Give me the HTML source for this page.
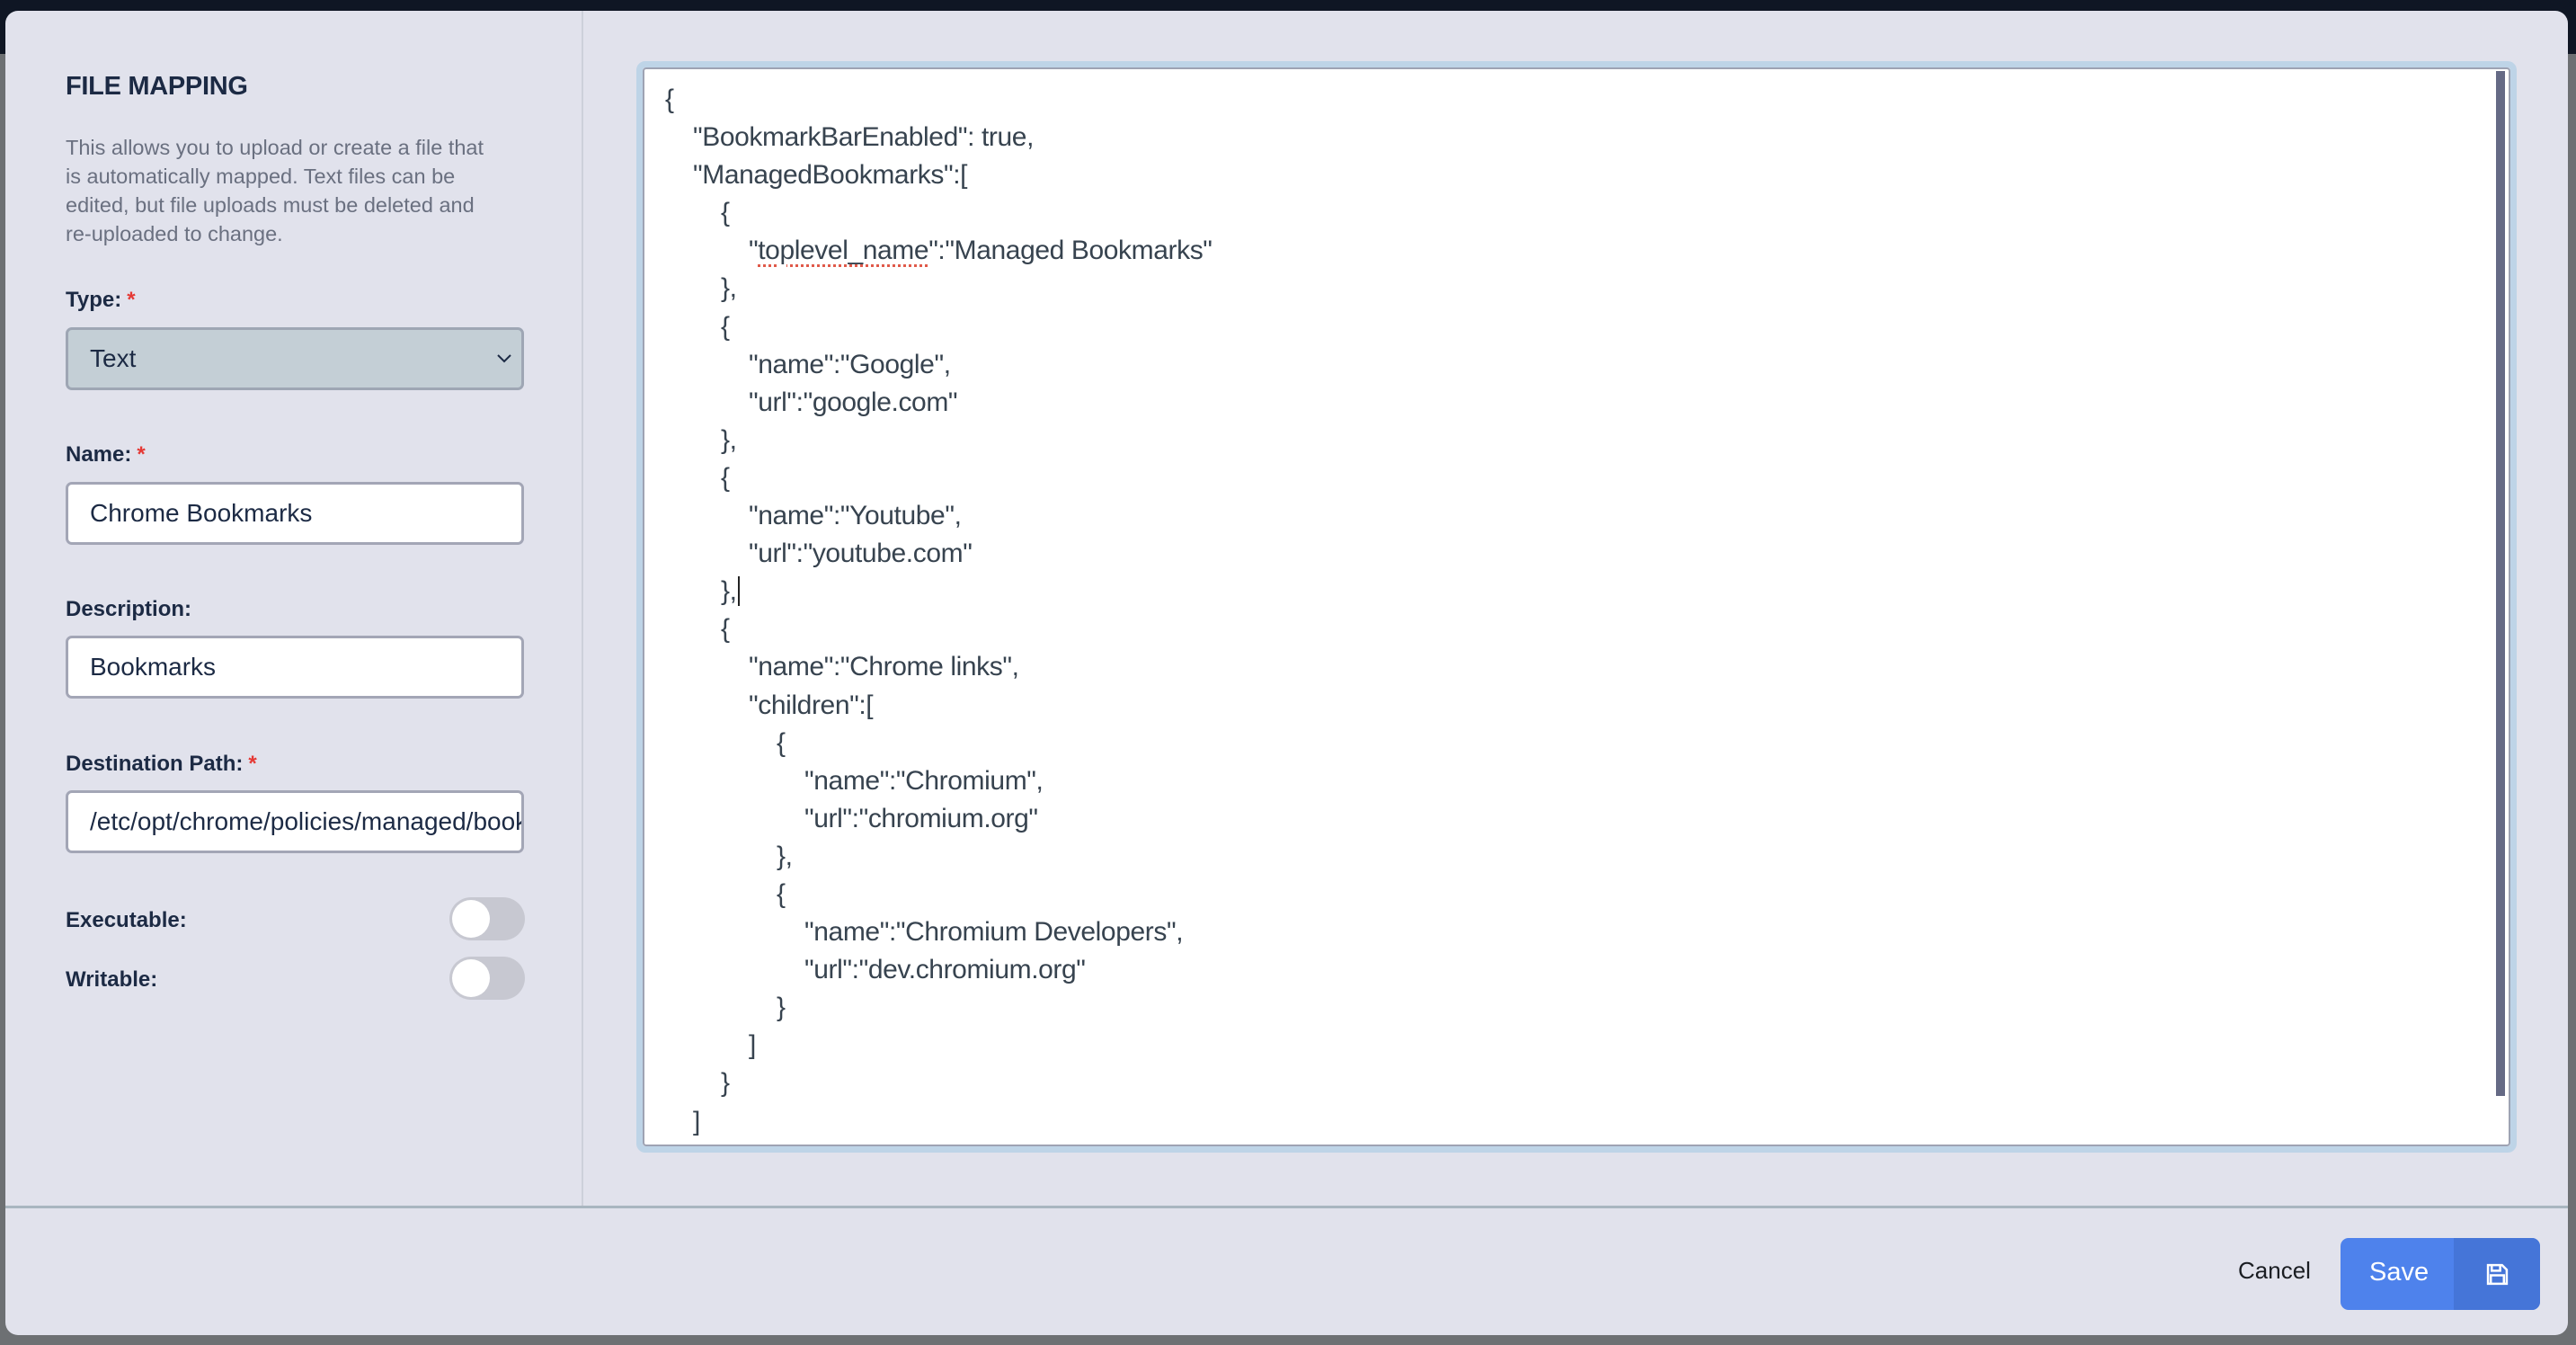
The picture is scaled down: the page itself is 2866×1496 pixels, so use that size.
<!DOCTYPE html>
<html><head><meta charset="utf-8"><style>
*{box-sizing:border-box;margin:0;padding:0}
html,body{width:2866px;height:1496px;overflow:hidden;background:#6d7073;font-family:"Liberation Sans",sans-serif}
.topbar{position:absolute;left:0;top:0;width:2866px;height:60px;background:#0f1624}
.modal{position:absolute;left:6px;top:12px;width:2851px;height:1473px;background:#e1e2ec;border-radius:14px;overflow:hidden}
.left{position:absolute;left:0;top:0;width:643px;height:1329px;border-right:2px solid #cdd0da}
.footer{position:absolute;left:0;top:1329px;width:100%;height:144px;border-top:3px solid #a9b6c0}
h1{position:absolute;left:67px;top:68px;font-size:29px;font-weight:bold;color:#1c2a44;letter-spacing:-0.3px}
.desc{position:absolute;left:67px;top:136px;white-space:nowrap;font-size:23.5px;line-height:32px;color:#6a7080}
.lbl{position:absolute;left:67px;font-size:24px;font-weight:bold;color:#1c2a44}
.lbl i{color:#e53935;font-style:normal;margin-left:6px}
.inp{position:absolute;left:67px;width:510px;height:70px;background:#fff;border:3px solid #a3a6b6;border-radius:7px;font-size:28px;color:#1c2a44;padding-left:24px;line-height:64px;white-space:nowrap;overflow:hidden}
.sel{background:#c4cfd6;border-color:#9ea6b4}
.tog{position:absolute;left:494px;width:84px;height:48px;border-radius:24px;background:#c7c8d1}
.tog:after{content:"";position:absolute;left:3px;top:3px;width:42px;height:42px;border-radius:50%;background:#fff}
.ta{position:absolute;left:702px;top:56px;width:2092px;height:1214px;border:7px solid #bed4e7;border-radius:10px}
.tai{position:absolute;left:0;top:0;right:0;bottom:0;background:#fff;border:2px solid #9ea3b3;border-radius:4px;overflow:hidden}
.sb{position:absolute;right:4px;top:2px;width:10px;height:1140px;background:#656a85}
.code{position:absolute;left:23px;top:13px;font-size:30px;letter-spacing:-0.4px;color:#37434f;line-height:42.1px}
.code div{white-space:pre;height:42.1px}
.cancel{position:absolute;left:2484px;top:54px;font-size:26px;color:#1a1d22}
.save{position:absolute;left:2598px;top:33px;width:222px;height:80px;border-radius:9px;overflow:hidden;background:#4e82ec}
.save span{position:absolute;left:32px;top:22px;font-size:29px;color:#fff}
.save b{position:absolute;left:126px;top:0;width:96px;height:80px;background:#4575d8}
</style></head><body>
<div class="topbar"></div>
<div class="modal">
 <div class="left">
  <h1>FILE MAPPING</h1>
  <div class="desc">This allows you to upload or create a file that<br>is automatically mapped. Text files can be<br>edited, but file uploads must be deleted and<br>re-uploaded to change.</div>
  <div class="lbl" style="top:308px">Type:<i>*</i></div>
  <div class="inp sel" style="top:352px">Text<svg style="position:absolute;right:10px;top:26px" width="18" height="12" viewBox="0 0 18 12"><path d="M2 2l7 7 7-7" fill="none" stroke="#1c2a44" stroke-width="2"/></svg></div>
  <div class="lbl" style="top:480px">Name:<i>*</i></div>
  <div class="inp" style="top:524px">Chrome Bookmarks</div>
  <div class="lbl" style="top:652px">Description:</div>
  <div class="inp" style="top:695px">Bookmarks</div>
  <div class="lbl" style="top:824px">Destination Path:<i>*</i></div>
  <div class="inp" style="top:867px">/etc/opt/chrome/policies/managed/bookmarks.json</div>
  <div class="lbl" style="top:998px">Executable:</div>
  <div class="tog" style="top:986px"></div>
  <div class="lbl" style="top:1064px">Writable:</div>
  <div class="tog" style="top:1052px"></div>
 </div>
 <div class="ta"><div class="tai">
  <div class="code">
<div>{</div>
<div style="padding-left:31px">"BookmarkBarEnabled": true,</div>
<div style="padding-left:31px">"ManagedBookmarks":[</div>
<div style="padding-left:62px">{</div>
<div style="padding-left:93px">"<span style="text-decoration:underline dotted #e05a4a;text-underline-offset:6px">toplevel_name</span>":"Managed Bookmarks"</div>
<div style="padding-left:62px">},</div>
<div style="padding-left:62px">{</div>
<div style="padding-left:93px">"name":"Google",</div>
<div style="padding-left:93px">"url":"google.com"</div>
<div style="padding-left:62px">},</div>
<div style="padding-left:62px">{</div>
<div style="padding-left:93px">"name":"Youtube",</div>
<div style="padding-left:93px">"url":"youtube.com"</div>
<div style="padding-left:62px">},<span style="border-left:2px solid #222;margin-left:1px"> </span></div>
<div style="padding-left:62px">{</div>
<div style="padding-left:93px">"name":"Chrome links",</div>
<div style="padding-left:93px">"children":[</div>
<div style="padding-left:124px">{</div>
<div style="padding-left:155px">"name":"Chromium",</div>
<div style="padding-left:155px">"url":"chromium.org"</div>
<div style="padding-left:124px">},</div>
<div style="padding-left:124px">{</div>
<div style="padding-left:155px">"name":"Chromium Developers",</div>
<div style="padding-left:155px">"url":"dev.chromium.org"</div>
<div style="padding-left:124px">}</div>
<div style="padding-left:93px">]</div>
<div style="padding-left:62px">}</div>
<div style="padding-left:31px">]</div>
  </div>
  <div class="sb"></div>
 </div></div>
 <div class="footer">
  <div class="cancel">Cancel</div>
  <div class="save"><span>Save</span><b><svg style="position:absolute;left:36px;top:28px" width="25" height="25" viewBox="0 0 24 24"><path d="M2 2h15l5 5v15H2z M6 2v6h9V2 M5 13h14v9H5z" fill="none" stroke="#fff" stroke-width="2.4" stroke-linejoin="miter"/></svg></b></div>
 </div>
</div>
</body></html>
